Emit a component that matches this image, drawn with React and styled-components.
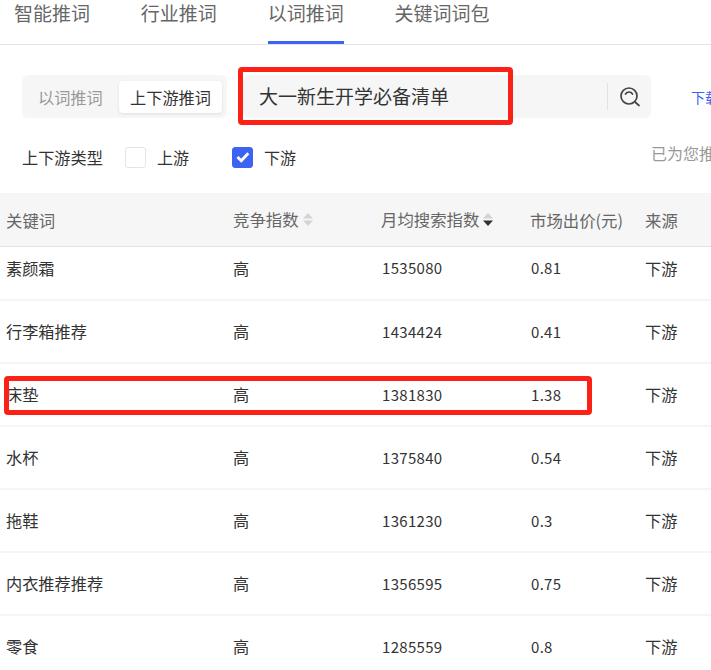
import styled, {createGlobalStyle} from "styled-components"

const GlobalStyle = createGlobalStyle`
  html, body {
    margin: 0;
    padding: 0;
    background: #fff;
  }
  body {
    font-family: "Noto Sans CJK SC", "Liberation Sans", sans-serif;
  }
`

const Page = styled.div`
  position: relative;
  width: 711px;
  height: 670px;
  overflow: hidden;
  background: #fff;
`

const Tabs = styled.div`
  display: flex;
  gap: 50.8px;
  height: 44px;
  padding-left: 14px;
  border-bottom: 1px solid #e4e4e4;
`

const Tab = styled.div`
  height: 44px;
  box-sizing: border-box;
  font-size: 19px;
  line-height: 26px;
  color: #666;
  white-space: nowrap;
  border-bottom: 3px solid ${props => (props.$active ? "#3d63f5" : "transparent")};
`

const SearchRow = styled.div`
  display: flex;
  align-items: center;
  margin-top: 30px;
  padding-left: 22px;
  width: 760px;
`

const Segment = styled.div`
  display: flex;
  align-items: center;
  width: 205px;
  height: 43px;
  box-sizing: border-box;
  padding: 0 5px 0 16px;
  justify-content: space-between;
  background: #f6f6f6;
  border-radius: 6px;
`

const SegmentItem = styled.div`
  font-size: 16.2px;
  line-height: 32px;
  height: 32px;
  white-space: nowrap;
  color: ${props => (props.$active ? "#333" : "#999")};
  ${props =>
    props.$active &&
    `
    width: 103px;
    text-align: center;
    background: #fff;
    border-radius: 4px;
    box-shadow: 0 1px 3px rgba(0, 0, 0, 0.1);
  `}
`

const SearchBox = styled.div`
  display: flex;
  align-items: center;
  width: 408px;
  height: 43px;
  margin-left: 16px;
  padding-left: 16px;
  box-sizing: border-box;
  background: #f6f6f6;
  border-radius: 6px;
`

const SearchText = styled.div`
  flex: 1;
  font-size: 19px;
  line-height: 42px;
  height: 43px;
  color: #333;
  white-space: nowrap;
`

const SearchButton = styled.div`
  display: flex;
  align-items: center;
  justify-content: center;
  width: 43px;
  height: 27px;
  border-left: 1px solid #e2e2e2;
`

const DownloadLink = styled.div`
  margin-left: 40px;
  font-size: 14px;
  color: #3d63f5;
  white-space: nowrap;
`

const FilterRow = styled.div`
  display: flex;
  align-items: center;
  height: 22px;
  margin-top: 28px;
  padding-left: 22px;
  width: 800px;
`

const FilterLabel = styled.div`
  width: 103px;
  font-size: 16.2px;
  line-height: 20px;
  color: #333;
  white-space: nowrap;
`

const CheckOption = styled.div`
  display: flex;
  align-items: center;
  gap: 11px;
  width: 107px;
  font-size: 16px;
  line-height: 20px;
  color: #333;
  white-space: nowrap;
`

const CheckBox = styled.div`
  display: flex;
  align-items: center;
  justify-content: center;
  width: 21px;
  height: 21px;
  box-sizing: border-box;
  border-radius: 3px;
  border: 1px solid ${props => (props.$checked ? "#3d63f5" : "#e4e4e4")};
  background: ${props => (props.$checked ? "#3d63f5" : "#fff")};
`

const Hint = styled.div`
  margin-left: 312px;
  margin-top: -8px;
  font-size: 16px;
  color: #999;
  white-space: nowrap;
`

const Table = styled.div`
  position: relative;
  margin-top: 25px;
`

const HeaderRow = styled.div`
  display: grid;
  grid-template-columns: 233px 148px 149px 115px 66px;
  align-items: center;
  height: 54px;
  box-sizing: border-box;
  background: #f6f6f6;
  border-bottom: 1px solid #e2e2e2;
`

const HeaderCell = styled.div`
  display: flex;
  align-items: center;
  gap: 4px;
  font-size: 16.4px;
  color: #666;
  white-space: nowrap;
  padding-left: ${props => (props.$first ? "6px" : "0")};
  margin-top: ${props => (props.$sortable ? "-1px" : "1px")};
`

const SortArrows = styled.svg`
  width: 10px;
  height: 13px;
  flex: none;
`

const Row = styled.div`
  display: grid;
  grid-template-columns: 233px 148px 149px 115px 66px;
  height: ${props => (props.$short ? "54px" : "63px")};
  box-sizing: border-box;
  padding-bottom: ${props => (props.$short ? "11px" : "1px")};
  align-items: center;
  border-bottom: 2px solid #f5f5f5;
`

const Cell = styled.div`
  font-size: ${props => (props.$num ? "15px" : "16.2px")};
  color: #333;
  white-space: nowrap;
  padding-left: ${props => (props.$first ? "6px" : props.$num ? "1px" : "0")};
  letter-spacing: ${props => (props.$num ? "0.3px" : "0")};
`

const RedBox = styled.div`
  position: absolute;
  box-sizing: border-box;
  left: ${props => props.$x}px;
  top: ${props => props.$y}px;
  width: ${props => props.$w}px;
  height: ${props => props.$h}px;
  border: ${props => props.$stroke}px solid #fb2116;
  border-radius: 4px;
`

const SearchIcon = () => (
  <svg width="22" height="22" viewBox="0 0 22 22" fill="none" stroke="#444" strokeWidth="1.7" strokeLinecap="round">
    <circle cx="10" cy="10" r="8" />
    <path d="M6.5 8c.8-1.300 2-2 3.500-2s2.700.7 3.500 2" />
    <path d="M16 16l4 3.500" />
  </svg>
)

const Check = () => (
  <svg width="14" height="12" viewBox="0 0 14 12" fill="none" stroke="#fff" strokeWidth="2.800">
    <path d="M1.500 6l3.800 3.800 7-7.500" />
  </svg>
)

const Sort = ({down}) => (
  <SortArrows viewBox="0 0 10 13">
    <path d="M5 0l5 5.500H0z" fill="#d4d4d4" />
    <path d="M5 13l5-5.500H0z" fill={down ? "#333" : "#d4d4d4"} />
  </SortArrows>
)

const ROWS = [
  ["素颜霜", "1535080", "0.81"],
  ["行李箱推荐", "1434424", "0.41"],
  ["床垫", "1381830", "1.38"],
  ["水杯", "1375840", "0.54"],
  ["拖鞋", "1361230", "0.3"],
  ["内衣推荐推荐", "1356595", "0.75"],
  ["零食", "1285559", "0.8"]
]

const App = () => (
  <Page>
    <GlobalStyle />
    <Tabs>
      <Tab>智能推词</Tab>
      <Tab>行业推词</Tab>
      <Tab $active>以词推词</Tab>
      <Tab>关键词词包</Tab>
    </Tabs>
    <SearchRow>
      <Segment>
        <SegmentItem>以词推词</SegmentItem>
        <SegmentItem $active>上下游推词</SegmentItem>
      </Segment>
      <SearchBox>
        <SearchText>大一新生开学必备清单</SearchText>
        <SearchButton>
          <SearchIcon />
        </SearchButton>
      </SearchBox>
      <DownloadLink>下载</DownloadLink>
    </SearchRow>
    <FilterRow>
      <FilterLabel>上下游类型</FilterLabel>
      <CheckOption>
        <CheckBox />
        上游
      </CheckOption>
      <CheckOption>
        <CheckBox $checked>
          <Check />
        </CheckBox>
        下游
      </CheckOption>
      <Hint>已为您推荐</Hint>
    </FilterRow>
    <Table>
      <HeaderRow>
        <HeaderCell $first>关键词</HeaderCell>
        <HeaderCell $sortable>
          竞争指数
          <Sort />
        </HeaderCell>
        <HeaderCell $sortable>
          月均搜索指数
          <Sort down />
        </HeaderCell>
        <HeaderCell>市场出价(元)</HeaderCell>
        <HeaderCell>来源</HeaderCell>
      </HeaderRow>
      {ROWS.map(([keyword, searches, price], i) => (
        <Row key={keyword} $short={i === 0}>
          <Cell $first>{keyword}</Cell>
          <Cell>高</Cell>
          <Cell $num>{searches}</Cell>
          <Cell $num>{price}</Cell>
          <Cell>下游</Cell>
        </Row>
      ))}
    </Table>
    <RedBox $x={238} $y={67} $w={275} $h={58} $stroke={5} />
    <RedBox $x={4} $y={376} $w={588} $h={39} $stroke={5} />
  </Page>
)

export default App
